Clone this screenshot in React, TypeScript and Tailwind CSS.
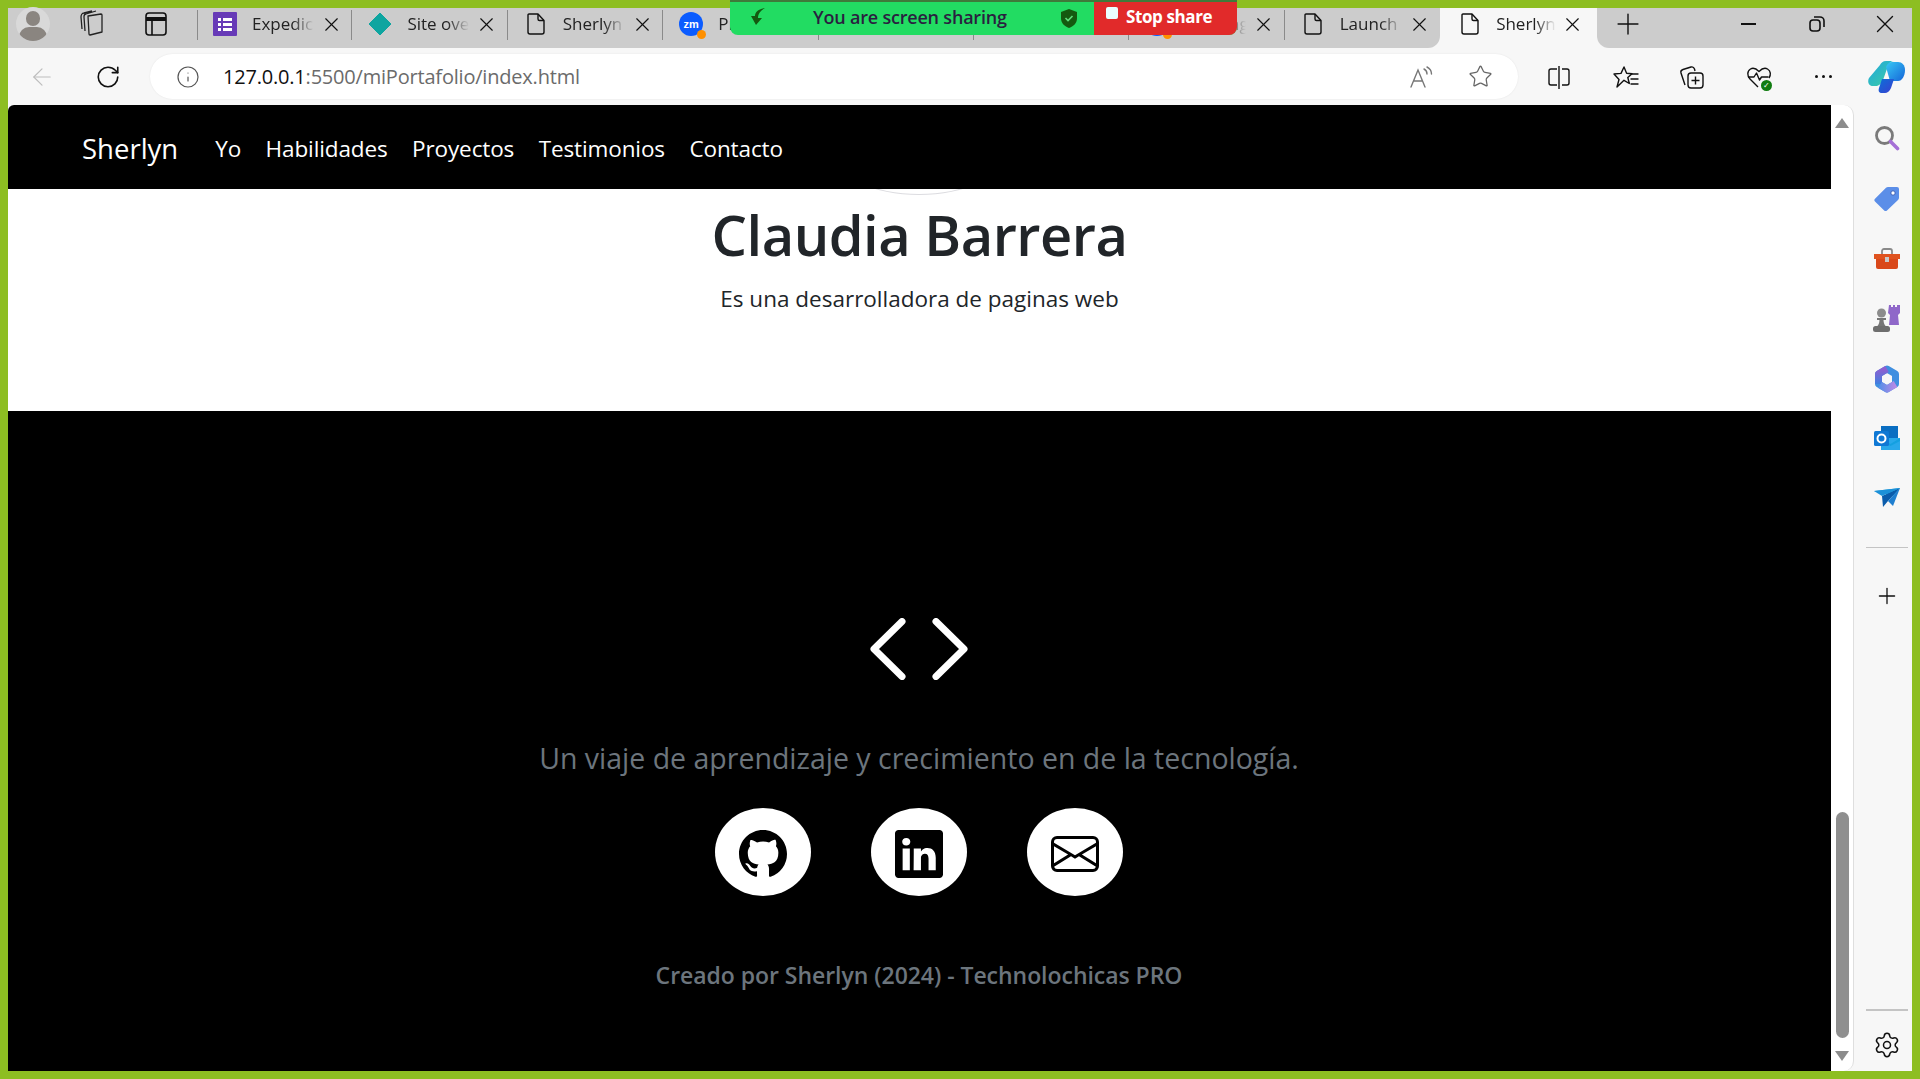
import React from "react";
import { BsGithub, BsLinkedin, BsEnvelope } from "react-icons/bs";
import { X, Plus, RotateCw, Info, ArrowLeft, Star, Settings } from "lucide-react";

const fade = "overflow-hidden whitespace-nowrap [mask-image:linear-gradient(to_right,black_65%,transparent)]";

const DocIcon = () => (
  <svg width="20" height="24" viewBox="0 0 20 24" fill="none" stroke="#111" strokeWidth="1.4" strokeLinejoin="round">
    <path d="M3 2h9l6 6.5V20a2 2 0 0 1-2 2H4a2 2 0 0 1-2-2V3a1 1 0 0 1 1-1z" />
    <path d="M12 2v5a1.5 1.5 0 0 0 1.5 1.5H18" />
  </svg>
);

const FormsIcon = () => (
  <svg width="24" height="24" viewBox="0 0 24 24">
    <rect width="24" height="24" rx="1" fill="#673ab7" />
    <g fill="#fff">
      <rect x="5" y="6" width="3" height="3" /><rect x="10" y="6" width="9" height="3" />
      <rect x="5" y="11" width="3" height="3" /><rect x="10" y="11" width="9" height="3" />
      <rect x="5" y="16" width="3" height="3" /><rect x="10" y="16" width="9" height="3" />
    </g>
  </svg>
);

const Diamond = () => (
  <svg width="24" height="24" viewBox="0 0 24 24"><path d="M12 1l11 11-11 11L1 12z" fill="#0ea5a0" stroke="#0ea5a0" strokeLinejoin="round" /></svg>
);

const Zoom = () => (
  <span className="relative block h-6 w-6">
    <span className="flex h-6 w-6 items-center justify-center rounded-full bg-[#0b5cff] text-[11px] font-bold text-white [font-family:'Liberation_Sans',sans-serif]">zm</span>
    <span className="absolute -bottom-[3px] -right-[3px] h-[9px] w-[9px] rounded-full bg-[#ff9000]" />
  </span>
);

function Tab({ icon, label, sep = true }: { icon?: React.ReactNode; label?: string; sep?: boolean }) {
  return (
    <div className="relative flex h-10 w-[155.4px] shrink-0 items-center pb-[8px] pl-[16px] pr-0">
      {sep && <span className="absolute right-0 top-[2px] h-[30px] w-px bg-[#8a8a8a]" />}
      <span className="flex w-[24px] shrink-0 items-center justify-center">{icon}</span>
      <span className={`ml-[15px] w-[62px] text-[17px] text-[#222] ${fade}`}>{label}</span>
      <X size={23} strokeWidth={1.2} className="ml-[6px] shrink-0 text-[#111]" />
    </div>
  );
}

const ReadAloud = () => (
  <svg width="26" height="24" viewBox="0 0 26 24" fill="none" stroke="#777" strokeWidth="1.4" strokeLinecap="round">
    <path d="M2 22 9 5l7 17M5 16h8" />
    <path d="M15 4c2 1 3 3 3 5M18 2c3 1.5 4.5 4 4.5 7" />
  </svg>
);

const SplitIcon = () => (
  <svg width="24" height="24" viewBox="0 0 24 24" fill="none" stroke="#111" strokeWidth="1.4">
    <path d="M10 4H4a2 2 0 0 0-2 2v12a2 2 0 0 0 2 2h6M15 4h5a2 2 0 0 1 2 2v12a2 2 0 0 1-2 2h-5M12 1v23" />
  </svg>
);

const FavIcon = () => (
  <svg width="26" height="24" viewBox="0 0 26 24" fill="none" stroke="#111" strokeWidth="1.4" strokeLinejoin="round" strokeLinecap="round">
    <path d="M11 2l2.6 6.3 5.4.4-4.2 3.8 1.5 6-5.3-3.2L4 22l2-7.5L1 9l7-.6z" />
    <path d="M18 9h7M18 14h7M18 19h7" />
  </svg>
);

const CollectionIcon = () => (
  <svg width="26" height="26" viewBox="0 0 26 26" fill="none" stroke="#111" strokeWidth="1.4" strokeLinejoin="round">
    <path d="M6 21 2 9c-.4-1.500.3-3 2-3.500L12 3c1.500-.4 3 .5 3.500 2l.5 2" />
    <rect x="9" y="9" width="15" height="15" rx="3" />
    <path d="M16.500 12.500v8M12.500 16.500h8" />
  </svg>
);

const HealthIcon = () => (
  <span className="relative block h-[26px] w-[26px]">
    <svg width="26" height="26" viewBox="0 0 26 26" fill="none" stroke="#111" strokeWidth="1.4" strokeLinejoin="round">
      <path d="M12 23 4 15C1 12 1 7 4.500 5c3-1.700 6 0 8.500 2.500C15.500 5 18.500 3.300 21.500 5 25 7 25 11 23 14" />
      <path d="M2 13h6l2.500-4 3 7 2-3h7" />
    </svg>
    <span className="absolute -bottom-[1px] right-0 flex h-[11px] w-[11px] items-center justify-center rounded-full bg-[#107c10] text-[8px] leading-none text-white">✓</span>
  </span>
);

const CopilotIcon = () => (
  <svg width="38" height="32" viewBox="0 0 38 32">
    <defs>
      <linearGradient id="cp1" x1="0" y1="0" x2="1" y2="1"><stop offset="0" stopColor="#1fa6e0" /><stop offset="1" stopColor="#3fd0a0" /></linearGradient>
      <linearGradient id="cp2" x1="0" y1="0" x2="1" y2="1"><stop offset="0" stopColor="#0b6fd8" /><stop offset="1" stopColor="#3b3fd0" /></linearGradient>
      <linearGradient id="cp3" x1="0" y1="0" x2="1" y2="1"><stop offset="0" stopColor="#37c8f5" /><stop offset="1" stopColor="#1565d8" /></linearGradient>
    </defs>
    <path d="M12 4c1-2 3-4 6-4h8c-3 0-5 2-6 5l-5 14c-1 3-3 5-6 6H5c-4 0-6-4-4-8z" fill="url(#cp1)" />
    <path d="M18 6c1-3 3-5 6-5h6c4 0 7 3 7 8 0 6-3 11-7 11h-8z" fill="url(#cp3)" />
    <path d="M14 32c-3 0-4-2-3-5l3-9h12l-3 9c-1 3-4 5-6 5z" fill="url(#cp2)" />
  </svg>
);

const SearchSide = () => (
  <svg width="26" height="26" viewBox="0 0 26 26" fill="none">
    <circle cx="10.500" cy="10.500" r="8" stroke="#7a7a7a" strokeWidth="2.800" />
    <path d="M16.500 16.500l7 7" stroke="#a56fd6" strokeWidth="3.600" strokeLinecap="round" />
  </svg>
);
const TagSide = () => (
  <svg width="26" height="26" viewBox="0 0 26 26">
    <path d="M14 2h9a2 2 0 0 1 2 2v9a3 3 0 0 1-1 2L13 25.500a2 2 0 0 1-2.800 0L1 16.500a2 2 0 0 1 0-2.800L12 2.800A3 3 0 0 1 14 2z" fill="#5b8ee8" />
    <circle cx="19" cy="8" r="2.200" fill="#fff" stroke="#3b5fb8" strokeWidth="1" />
  </svg>
);
const ToolSide = () => (
  <svg width="28" height="22" viewBox="0 0 28 22">
    <path d="M9 6V3a2 2 0 0 1 2-2h6a2 2 0 0 1 2 2v3" fill="none" stroke="#8a8a8a" strokeWidth="1.800" />
    <path d="M1 6h26v5H1z" fill="#e0531f" />
    <path d="M3 11h22v8a2 2 0 0 1-2 2H5a2 2 0 0 1-2-2z" fill="#d9481a" />
    <rect x="12" y="9" width="4" height="5" fill="#c9c9c9" />
  </svg>
);
const ChessSide = () => (
  <svg width="28" height="28" viewBox="0 0 28 28">
    <path d="M16 0h2v2h2V0h2v2h2V0h3v8l-2 2 1 10H16l1-10-2-2z" fill="#8f67c9" />
    <circle cx="8.500" cy="8" r="4.500" fill="#8c8c8c" />
    <path d="M4 13h9v2H10.500c0 3 1 5 3 7H3.500c2-2 3-4 3-7H4z" fill="#767676" />
    <rect x="0" y="21" width="17" height="6" rx="2.500" fill="#6e6e6e" />
  </svg>
);
const M365Side = () => (
  <svg width="26" height="28" viewBox="0 0 26 28" fill="none" strokeLinejoin="round">
    <defs>
      <linearGradient id="m1" x1="0" y1="0" x2="0" y2="1"><stop offset="0" stopColor="#8f5fd0" /><stop offset="1" stopColor="#3f7fe0" /></linearGradient>
      <linearGradient id="m2" x1="0" y1="0" x2="1" y2="0"><stop offset="0" stopColor="#5a8fe8" /><stop offset="1" stopColor="#b98ae6" /></linearGradient>
    </defs>
    <path d="M13 4 21.500 9v10L13 24 4.500 19V9z" stroke="#3f8fe0" strokeWidth="7" />
    <path d="M4.500 19V9L13 4" stroke="url(#m1)" strokeWidth="7" />
    <path d="M6 20l7 4 8.500-5" stroke="url(#m2)" strokeWidth="7" />
  </svg>
);
const OutlookSide = () => (
  <svg width="26" height="26" viewBox="0 0 26 26">
    <rect x="7" y="1" width="17" height="12" fill="#0a6ec2" />
    <path d="M7 13h19v12H7z" fill="#28a8ea" />
    <path d="M7 13l9.500 6L26 13v3l-9.500 5L7 16z" fill="#14a0e0" />
    <rect x="0" y="6" width="15" height="15" rx="1.500" fill="#0f78d4" />
    <circle cx="7.500" cy="13.500" r="4" fill="none" stroke="#fff" strokeWidth="2" />
  </svg>
);
const SendSide = () => (
  <svg width="26" height="20" viewBox="0 0 26 20">
    <path d="M0 3 26 0 19 8z" fill="#29a9e0" />
    <path d="M26 0 8 8l1 11 5-6z" fill="#0b5cab" />
    <path d="M0 3l8 5 18-8z" fill="#1c90d8" />
    <path d="M14 13l5 5 7-18z" fill="#1f7fd0" />
  </svg>
);

export default function App() {
  const ui = "[font-family:'Open_Sans','Noto_Sans',sans-serif]";
  return (
    <div className={`relative flex h-[1079px] w-[1920px] flex-col overflow-hidden bg-[#8dbe22] pb-2 pl-2 pr-2 pt-2 ${ui}`}>
      {/* Screen sharing banner */}
      <div className="absolute left-[730px] top-0 z-10 flex h-[35px] w-[507px] overflow-hidden rounded-b-[8px] border-t-2 border-[#3f7a3a] bg-[#22dc62]">
        <div className="relative flex w-[364px] items-center pb-[3px]">
          <svg className="absolute left-[20px] top-[6px]" width="16" height="18" viewBox="0 0 16 18"><path d="M15 0C8 1 5 4 5 8H1l5 9 6-7H8c0-4 2-7 7-10z" fill="#14590f" /></svg>
          <span className="ml-[83px] whitespace-nowrap text-[18px] font-semibold tracking-[-0.2px] text-[#2a1f40]">You are screen sharing</span>
          <svg className="absolute left-[331px] top-[7px]" width="16" height="19" viewBox="0 0 16 19"><path d="M8 0l8 3v6c0 5-3 8-8 10-5-2-8-5-8-10V3z" fill="#14590f" /><path d="M4.500 9l2.500 2.500L11.500 7" stroke="#5fdc7a" strokeWidth="1.600" fill="none" /></svg>
        </div>
        <div className="relative flex flex-1 items-center bg-[#e12a2a] pb-[3px]">
          <span className="absolute left-[12px] top-[5px] h-[12px] w-[12px] rounded-[2px] bg-[#eaffff]" />
          <span className="ml-[32px] whitespace-nowrap text-[17px] font-bold tracking-[-0.4px] text-white">Stop share</span>
        </div>
      </div>

      {/* Tab strip */}
      <div className="flex h-10 shrink-0 bg-[#f7f7f7]">
        <div className="flex rounded-br-[12px] bg-[#cccccc]">
          <div className="flex w-[189px] items-center pb-[8px]">
            <span className="relative ml-[8px] block h-[34px] w-[34px] overflow-hidden rounded-full bg-[#d9d9d9]">
              <span className="absolute left-[10px] top-[4px] h-[15px] w-[14px] rounded-full bg-[#8a8580]" />
              <span className="absolute left-[3px] top-[20px] h-[20px] w-[28px] rounded-full bg-[#8a8580]" />
            </span>
            <svg className="ml-[29px]" width="26" height="28" viewBox="0 0 26 28" fill="none" stroke="#222" strokeWidth="1.300" strokeLinejoin="round">
              <path d="M9 6l13-2a1 1 0 0 1 1 1v17l-12 3a1 1 0 0 1-1-1z" />
              <path d="M6 21 5 7c0-2 1-3 2-3l10-3M3 19 2 7c0-2 1-4 3-4l8-2" />
            </svg>
            <svg className="ml-[40px]" width="22" height="24" viewBox="0 0 22 24" fill="none" stroke="#111" strokeWidth="1.600">
              <rect x="1" y="1" width="20" height="22" rx="3" />
              <path d="M1 7h20" strokeWidth="4" />
              <path d="M7 7v16" />
            </svg>
          </div>
          <div className="absolute left-[197px] top-[10px] h-[30px] w-px bg-[#8a8a8a]" />
          <Tab icon={<FormsIcon />} label="Expedición" />
          <Tab icon={<Diamond />} label="Site overview" />
          <Tab icon={<DocIcon />} label="Sherlyn" />
          <Tab icon={<Zoom />} label="Pr" />
          <Tab icon={<DocIcon />} label="" />
          <Tab label="" />
          <Tab icon={<Zoom />} label="Meetings" />
          <Tab icon={<DocIcon />} label="Launch" sep={false} />
        </div>
        <div className="flex h-10 w-[157px] shrink-0 items-center rounded-t-[6px] bg-[#f7f7f7] pb-[8px] pl-[20px]">
          <DocIcon />
          <span className={`ml-[16px] w-[60px] text-[17px] text-[#222] ${fade}`}>Sherlyn</span>
          <X size={23} strokeWidth={1.2} className="ml-[5px] shrink-0 text-[#111]" />
        </div>
        <div className="flex flex-1 items-center rounded-bl-[12px] bg-[#cccccc] pb-[9px]">
          <Plus size={34} strokeWidth={1} className="ml-[14px] shrink-0 text-[#111]" />
          <span className="ml-[96px] h-[2px] w-[15px] shrink-0 bg-[#111]" />
          <svg className="ml-[53px] shrink-0" width="16" height="16" viewBox="0 0 16 16" fill="none" stroke="#111" strokeWidth="1.600">
            <rect x="1" y="4" width="10" height="11" rx="3" />
            <path d="M5 1h6a4 4 0 0 1 4 4v6" />
          </svg>
          <X size={30} strokeWidth={1.1} className="ml-[45px] shrink-0 text-[#111]" />
        </div>
      </div>

      {/* Toolbar */}
      <div className="flex h-[57px] shrink-0 items-center bg-[#f7f7f7]">
        <ArrowLeft size={28} strokeWidth={1} className="ml-[20px] text-[#bdbdbd]" />
        <RotateCw size={26} strokeWidth={1.5} className="ml-[39px] text-[#111]" />
        <div className="ml-[29px] flex h-[45px] w-[1368px] items-center rounded-full bg-white pl-[26px] shadow-[0_0_2px_rgba(0,0,0,0.08)]">
          <Info size={24} strokeWidth={1.2} className="text-[#555]" />
          <span className="ml-[23px] whitespace-nowrap text-[20px] tracking-[-0.2px] text-[#111]">127.0.0.1<span className="text-[#6b6b6b]">:5500/miPortafolio/index.html</span></span>
          <span className="ml-auto flex items-center">
            <ReadAloud />
            <Star size={25} strokeWidth={1.2} className="ml-[33px] mr-[25px] text-[#666]" />
          </span>
        </div>
        <span className="ml-[29px]"><SplitIcon /></span>
        <span className="ml-[42px]"><FavIcon /></span>
        <span className="ml-[40px]"><CollectionIcon /></span>
        <span className="ml-[41px]"><HealthIcon /></span>
        <span className="ml-[43px] flex gap-[4px]">
          <i className="h-[3px] w-[3px] rounded-full bg-[#111]" />
          <i className="h-[3px] w-[3px] rounded-full bg-[#111]" />
          <i className="h-[3px] w-[3px] rounded-full bg-[#111]" />
        </span>
        <span className="ml-[36px]"><CopilotIcon /></span>
      </div>

      {/* Viewport */}
      <div className="flex min-h-0 flex-1 bg-[#f7f7f7]">
        <main className="flex w-[1823px] flex-col overflow-hidden rounded-tl-[6px] bg-white">
          <nav className="relative z-10 flex h-[84px] shrink-0 items-center bg-black pl-[74px] pt-[3px] text-white">
            <span className="text-[27.500px]">Sherlyn</span>
            <ul className="ml-[37px] flex gap-[24.500px] text-[22.500px] tracking-[-0.12px]">
              <li>Yo</li>
              <li>Habilidades</li>
              <li>Proyectos</li>
              <li>Testimonios</li>
              <li>Contacto</li>
            </ul>
          </nav>
          <section className="relative flex h-[222px] shrink-0 flex-col items-center bg-white text-[#212529]">
            <span className="absolute -top-[78px] left-[826px] h-[84px] w-[170px] rounded-[50%] border border-[#dcdce0] bg-white" />
            <h1 className="relative mt-[6px] text-[56px] font-semibold leading-[78px] tracking-[-0.5px]">Claudia Barrera</h1>
            <p className="relative mt-[10px] text-[22.500px] leading-[32px]">Es una desarrolladora de paginas web</p>
          </section>
          <footer className="flex flex-1 flex-col items-center bg-black pr-px">
            <svg className="mt-[207px]" width="98" height="62" viewBox="0 0 98 62" fill="none" stroke="#fff" strokeWidth="7" strokeLinecap="round" strokeLinejoin="round">
              <path d="M32 3.500 4 31l28 27.500M66 3.500 94 31 66 58.500" />
            </svg>
            <p className="mt-[58px] whitespace-nowrap text-[28.500px] leading-[40px] text-[#6c757d]">Un viaje de aprendizaje y crecimiento en de la tecnología.</p>
            <div className="mt-[30px] flex gap-[60px]">
              <a className="flex h-[88px] w-[96px] items-center justify-center rounded-[50%] bg-white pt-[3px] text-[48px] text-black"><BsGithub /></a>
              <a className="flex h-[88px] w-[96px] items-center justify-center rounded-[50%] bg-white pt-[3px] text-[48px] text-black"><BsLinkedin /></a>
              <a className="flex h-[88px] w-[96px] items-center justify-center rounded-[50%] bg-white pt-[3px] text-[48px] text-black"><BsEnvelope /></a>
            </div>
            <p className="mt-[62px] whitespace-nowrap text-[23px] font-semibold leading-[34px] tracking-[-0.04px] text-[#6c757d]">Creado por Sherlyn (2024) - Technolochicas PRO</p>
          </footer>
        </main>

        {/* Page scrollbar */}
        <div className="relative flex w-[23px] shrink-0 flex-col items-center rounded-r-[10px] border-r border-[#dedede] bg-white pt-[13px]">
          <span className="h-0 w-0 border-x-[7px] border-b-[10px] border-x-transparent border-b-[#8c8c8c]" />
          <span className="mt-auto h-[226px] w-[13px] rounded-full bg-[#8f8f8f]" />
          <span className="mb-[10px] mt-[13px] h-0 w-0 border-x-[7px] border-t-[10px] border-x-transparent border-t-[#8c8c8c]" />
        </div>

        {/* Edge sidebar */}
        <aside className="flex w-[58px] shrink-0 flex-col items-center pl-[7px] pt-[20px]">
          <span className="flex h-[26px] items-center"><SearchSide /></span>
          <span className="mt-[34px] flex h-[26px] items-center"><TagSide /></span>
          <span className="mt-[35px] flex h-[26px] items-center"><ToolSide /></span>
          <span className="mt-[34px] flex h-[26px] items-center"><ChessSide /></span>
          <span className="mt-[34px] flex h-[26px] items-center"><M365Side /></span>
          <span className="mt-[33px] flex h-[26px] items-center"><OutlookSide /></span>
          <span className="mt-[34px] flex h-[26px] items-center"><SendSide /></span>
          <span className="mt-[36px] h-px w-[42px] bg-[#c4c4c4]" />
          <Plus size={26} strokeWidth={1.2} className="mt-[35px] text-[#111]" />
          <span className="mt-auto h-[2px] w-[42px] bg-[#c4c4c4]" />
          <Settings size={28} strokeWidth={1.3} className="mb-[12px] mt-[20px] text-[#111]" />
        </aside>
      </div>
    </div>
  );
}
